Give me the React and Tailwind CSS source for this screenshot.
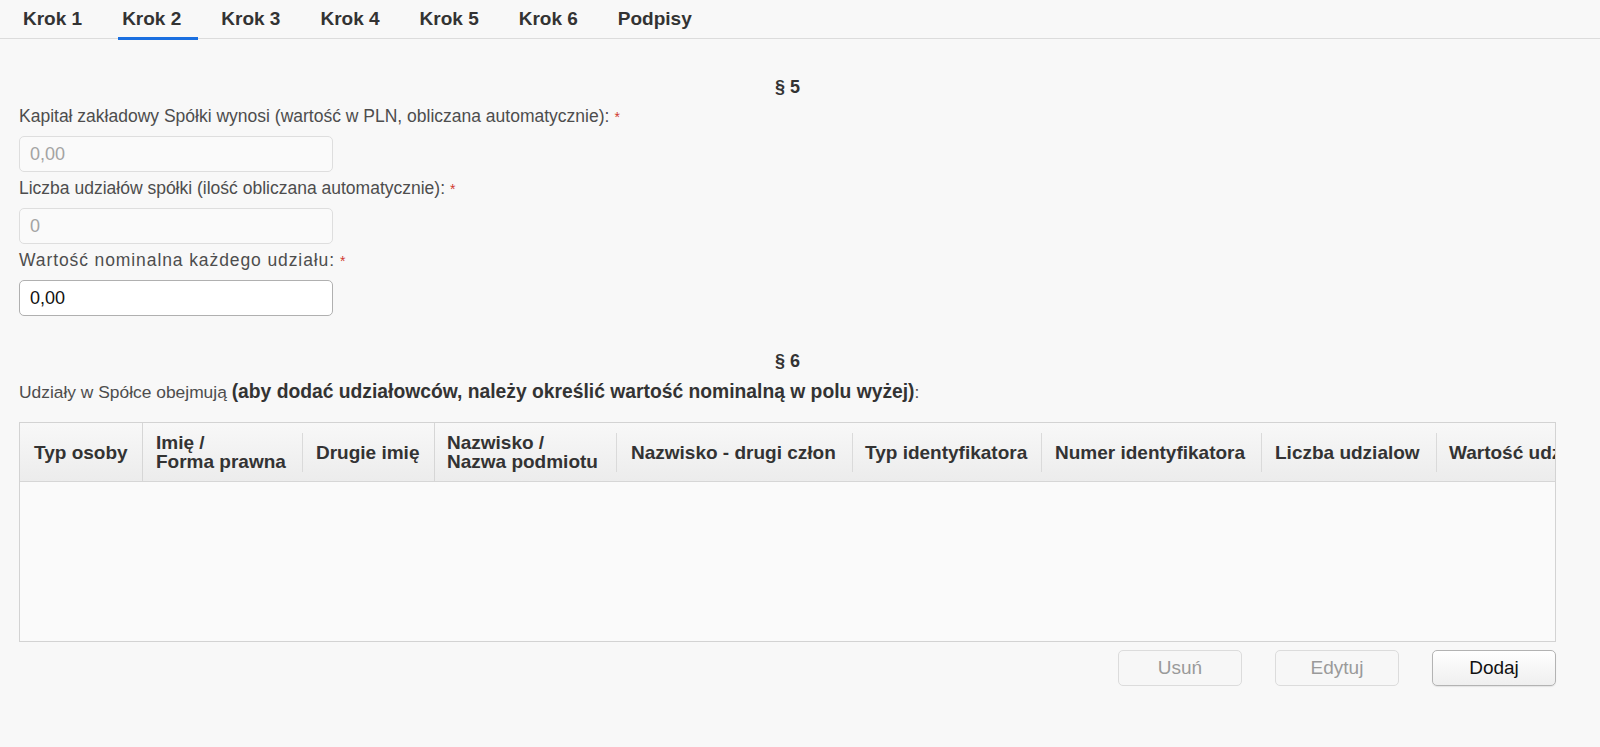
const tabs = ["Krok 1", "Krok 2", "Krok 3", "Krok 4", "Krok 5", "Krok 6", "Podpisy"];

const columns = [
  { lines: ["Typ osoby"], w: "w-[122px]", pl: "pl-[14px]", full: true },
  { lines: ["Imię /", "Forma prawna"], w: "w-[159px]", pl: "pl-[13px]", full: false },
  { lines: ["Drugie imię"], w: "w-[131px]", pl: "pl-[13px]", full: true },
  { lines: ["Nazwisko /", "Nazwa podmiotu"], w: "w-[181px]", pl: "pl-[12px]", full: false },
  { lines: ["Nazwisko - drugi człon"], w: "w-[235px]", pl: "pl-[14px]", full: false },
  { lines: ["Typ identyfikatora"], w: "w-[188px]", pl: "pl-[12px]", full: false },
  { lines: ["Numer identyfikatora"], w: "w-[219px]", pl: "pl-[13px]", full: false },
  { lines: ["Liczba udzialow"], w: "w-[174px]", pl: "pl-[13px]", full: false },
  { lines: ["Wartość udziałów"], w: "w-[200px]", pl: "pl-[12px]", full: null },
];

function Label({ children, className = "" }) {
  return (
    <div className={"h-[20px] text-[17.5px] leading-[20px] text-[#4d4d4d] " + className}>
      {children}
      <span className="ml-[5px] text-[14px] tracking-normal text-[#d0392f]">*</span>
    </div>
  );
}

function Field({ value, disabled, className = "" }) {
  return (
    <input
      readOnly
      value={value}
      className={
        "block h-[36px] w-[314px] rounded-[5px] border px-[10px] text-[18px] outline-none " +
        (disabled
          ? "border-[#dedede] bg-[#fafafa] text-[#a3a3a3] "
          : "border-[#b0b0b0] bg-white text-[#111] ") +
        className
      }
    />
  );
}

function Button({ children, disabled }) {
  return (
    <button
      className={
        "h-[36px] w-[124px] rounded-[5px] border text-[19px] " +
        (disabled
          ? "border-[#dcdcdc] bg-[#f7f7f7] text-[#9a9a9a]"
          : "border-[#b3b3b3] bg-gradient-to-b from-white to-[#efefef] text-[#111] shadow-[0_1px_1px_rgba(0,0,0,0.08)]")
      }
    >
      {children}
    </button>
  );
}

export default function App() {
  return (
    <div className="min-h-screen bg-[#f8f8f8] font-['Liberation_Sans',Arial,sans-serif]">
      {/* tabs */}
      <div className="flex h-[39px] gap-[19px] border-b border-[#dcdcdc] pl-[19px]">
        {tabs.map((t) => (
          <div
            key={t}
            className="relative flex items-center pl-[4px] pr-[17px] text-[19px] font-bold text-[#333]"
          >
            {t}
            {t === "Krok 2" && (
              <div className="absolute bottom-[-2px] left-0 right-0 h-[3px] bg-[#1a6fe0]" />
            )}
          </div>
        ))}
      </div>

      <div className="pl-[19px] pr-[44px] pt-[38px]">
        {/* § 5 */}
        <div className="h-[20px] text-center text-[18px] font-bold leading-[20px] text-[#333]">§ 5</div>

        <Label className="mt-[9px]">
          Kapitał zakładowy Spółki wynosi (wartość w PLN, obliczana automatycznie):
        </Label>
        <Field value="0,00" disabled className="mt-[10px]" />

        <Label className="mt-[6px]">Liczba udziałów spółki (ilość obliczana automatycznie):</Label>
        <Field value="0" disabled className="mt-[10px]" />

        <Label className="mt-[6px] tracking-[0.9px]">Wartość nominalna każdego udziału:</Label>
        <Field value="0,00" className="mt-[10px]" />

        {/* § 6 */}
        <div className="mt-[35px] h-[20px] text-center text-[18px] font-bold leading-[20px] text-[#333]">§ 6</div>
        <div className="mt-[11px] h-[20px] whitespace-nowrap text-[17.4px] leading-[20px] text-[#4d4d4d]">
          Udziały w Spółce obejmują{" "}
          <span className="text-[19.3px] font-bold text-[#333]">
            (aby dodać udziałowców, należy określić wartość nominalną w polu wyżej)
          </span>
          :
        </div>

        {/* table */}
        <div className="mt-[20px] h-[220px] overflow-hidden border border-[#d3d3d3]">
          <div className="flex h-[59px] border-b border-[#d6d6d6] bg-gradient-to-b from-[#f8f8f8] to-[#ececec]">
            {columns.map((c, i) => (
              <div key={i} className="flex shrink-0">
                <div
                  className={
                    "flex shrink-0 flex-col justify-center whitespace-nowrap text-[19px] font-bold leading-[19px] text-[#333] " +
                    c.w +
                    " " +
                    c.pl
                  }
                >
                  {c.lines.map((l) => (
                    <div key={l}>{l}</div>
                  ))}
                </div>
                {c.full === true && <div className="w-px shrink-0 bg-[#d6d6d6]" />}
                {c.full === false && (
                  <div className="mt-[10px] h-[39px] w-px shrink-0 bg-[#dadada]" />
                )}
              </div>
            ))}
          </div>
          <div className="h-full bg-[#fafafa]" />
        </div>

        {/* buttons */}
        <div className="mt-[8px] flex justify-end gap-[33px]">
          <Button disabled>Usuń</Button>
          <Button disabled>Edytuj</Button>
          <Button>Dodaj</Button>
        </div>
      </div>
    </div>
  );
}
